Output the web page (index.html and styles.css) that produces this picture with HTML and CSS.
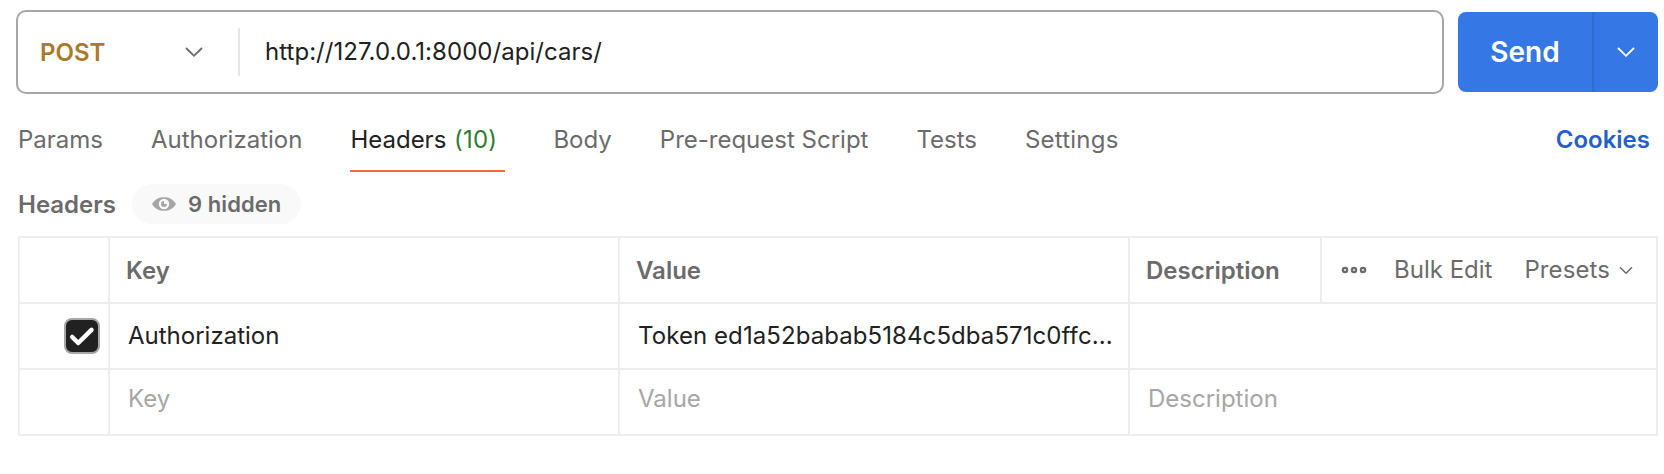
FILE: index.html
```html
<!DOCTYPE html>
<html lang="en">
<head>
<meta charset="utf-8">
<title>Request</title>
<link rel="stylesheet" href="styles.css">
</head>
<body>
<main class="request">
  <div class="request-bar">
    <div class="url-box">
      <div class="method"><span class="method-name">POST</span>
        <svg class="chevron" width="20" height="12" viewBox="0 0 20 12"><path d="M2 2L10 9.8L18 2"/></svg>
      </div>
      <div class="url">http://127.0.0.1:8000/api/cars/</div>
    </div>
    <div class="send">
      <div class="send-label">Send</div>
      <div class="send-more"><svg class="chevron chevron-light" width="20" height="12" viewBox="0 0 20 12"><path d="M2 2L10 9.8L18 2"/></svg></div>
    </div>
  </div>
  <nav class="tabs">
    <span class="tab">Params</span>
    <span class="tab">Authorization</span>
    <span class="tab tab-active">Headers <span class="count">(10)</span></span>
    <span class="tab">Body</span>
    <span class="tab">Pre-request Script</span>
    <span class="tab">Tests</span>
    <span class="tab tab-settings">Settings</span>
    <span class="cookies">Cookies</span>
  </nav>
  <div class="section-head">
    <span class="section-title">Headers</span>
    <span class="hidden-pill">
      <svg width="24" height="16" viewBox="0 0 24 16"><path class="eye" d="M0 8C3 3 7 1.2 12 1.2S21 3 24 8C21 13 17 14.8 12 14.8S3 13 0 8Z"/><circle cx="12" cy="8" r="5.2" fill="#f9f9f9"/><path class="eye" d="M12 5V8H15A3 3 0 1 1 12 5Z"/></svg>
      <span>9 hidden</span>
    </span>
  </div>
  <div class="grid">
    <div class="row row-head">
      <div class="cell"></div>
      <div class="cell">Key</div>
      <div class="cell">Value</div>
      <div class="cell">Description</div>
      <div class="cell actions">
        <svg class="dots" width="26" height="8" viewBox="0 0 26 8"><circle cx="4" cy="4" r="2.1"/><circle cx="13" cy="4" r="2.1"/><circle cx="22" cy="4" r="2.1"/></svg>
        <span class="bulk">Bulk Edit</span>
        <span class="presets">Presets</span>
        <svg class="chevron chevron-small" width="14" height="9" viewBox="0 0 14 9"><path d="M1 1.2L7 7.2L13 1.2"/></svg>
      </div>
    </div>
    <div class="row">
      <div class="cell cell-check"><span class="checkbox"><svg width="32" height="32" viewBox="0 0 32 32"><path d="M6.2 17L12.2 23L25.5 9.8"/></svg></span></div>
      <div class="cell">Authorization</div>
      <div class="cell token">Token ed1a52babab5184c5dba571c0ffc...</div>
      <div class="cell"></div>
    </div>
    <div class="row row-empty">
      <div class="cell"></div>
      <div class="cell">Key</div>
      <div class="cell">Value</div>
      <div class="cell">Description</div>
    </div>
  </div>
</main>
</body>
</html>
```
FILE: styles.css
```css
* { box-sizing: border-box; }
body { margin: 0; background: #fff; color: #212121; font: 24px/32px Inter, "Liberation Sans", sans-serif; }
svg { display: block; flex: none; }
.request { padding: 10px 6px 0 16px; white-space: nowrap; }
.request-bar { display: flex; align-items: center; gap: 14px; height: 84px; }
.url-box { flex: 1; height: 84px; display: flex; align-items: center; border: 2px solid #a6a6a6; border-radius: 10px; }
.method { width: 222px; height: 48px; display: flex; align-items: center; justify-content: space-between; padding: 0 34px 0 22px; border-right: 2px solid #e6e6e6; }
.method-name { padding-top: 2px; color: #a87b2a; font-weight: 600; }
.url { padding-left: 25px; letter-spacing: 0.04px; }
.chevron { fill: none; stroke: #6b6b6b; stroke-width: 1.8; }
.chevron-light { stroke: #fff; }
.chevron-small { stroke-width: 1.5; }
.send { display: flex; width: 200px; height: 80px; border-radius: 8px; background: #3578e5; color: #fff; overflow: hidden; }
.send-label { width: 136px; display: flex; align-items: center; justify-content: center; border-right: 2px solid #2f6dd2; font-size: 28px; font-weight: 600; }
.send-more { flex: 1; display: flex; align-items: center; justify-content: center; }
.tabs { display: flex; gap: 48px; height: 78px; padding: 30px 8px 0 2px; color: #6b6b6b; }
.tab-active { width: 155px; height: 48px; border-bottom: 2px solid #f26b3a; color: #212121; }
.tab-settings { letter-spacing: 0.2px; }
.count { margin-left: 1px; color: #2e7d32; letter-spacing: 0.2px; }
.cookies { margin-left: auto; color: #255fcb; font-weight: 600; }
.section-head { display: flex; align-items: center; height: 64px; padding: 0 0 0 2px; color: #6b6b6b; font-weight: 600; }
.section-title { width: 114px; padding-top: 2px; }
.hidden-pill { display: flex; align-items: center; gap: 12px; width: 169px; height: 40px; padding-left: 20px; border-radius: 20px; background: #f9f9f9; font-size: 22px; letter-spacing: 0.08px; }
.eye { fill: #a6a6a6; }
.grid { margin-left: 2px; border: solid #ededed; border-width: 2px 0 0 2px; }
.row { display: grid; grid-template-columns: 90px 510px 510px 1fr; height: 66px; }
.row-head { grid-template-columns: 90px 510px 510px 192px 1fr; color: #6b6b6b; font-weight: 600; }
.cell { display: flex; align-items: center; padding-left: 18px; border: solid #ededed; border-width: 0 2px 2px 0; }
.row-head .cell { padding: 2px 0 0 16px; }
.row-empty { color: #a6a6a6; }
.row-empty .cell { padding-bottom: 6px; }
.row-head .actions { padding: 0 0 0 19px; font-weight: 400; }
.token { letter-spacing: 0.08px; }
.dots { fill: none; stroke: #6b6b6b; stroke-width: 2.3; }
.bulk { margin-left: 27px; }
.presets { margin: 0 9px 0 32px; letter-spacing: 0.1px; }
.cell-check { justify-content: flex-end; padding-right: 8px; }
.checkbox { width: 36px; height: 36px; border: 2px solid #a6a6a6; border-radius: 8px; background: #212121; }
.checkbox path { fill: none; stroke: #fff; stroke-width: 4.5; stroke-linecap: round; stroke-linejoin: round; }
```
